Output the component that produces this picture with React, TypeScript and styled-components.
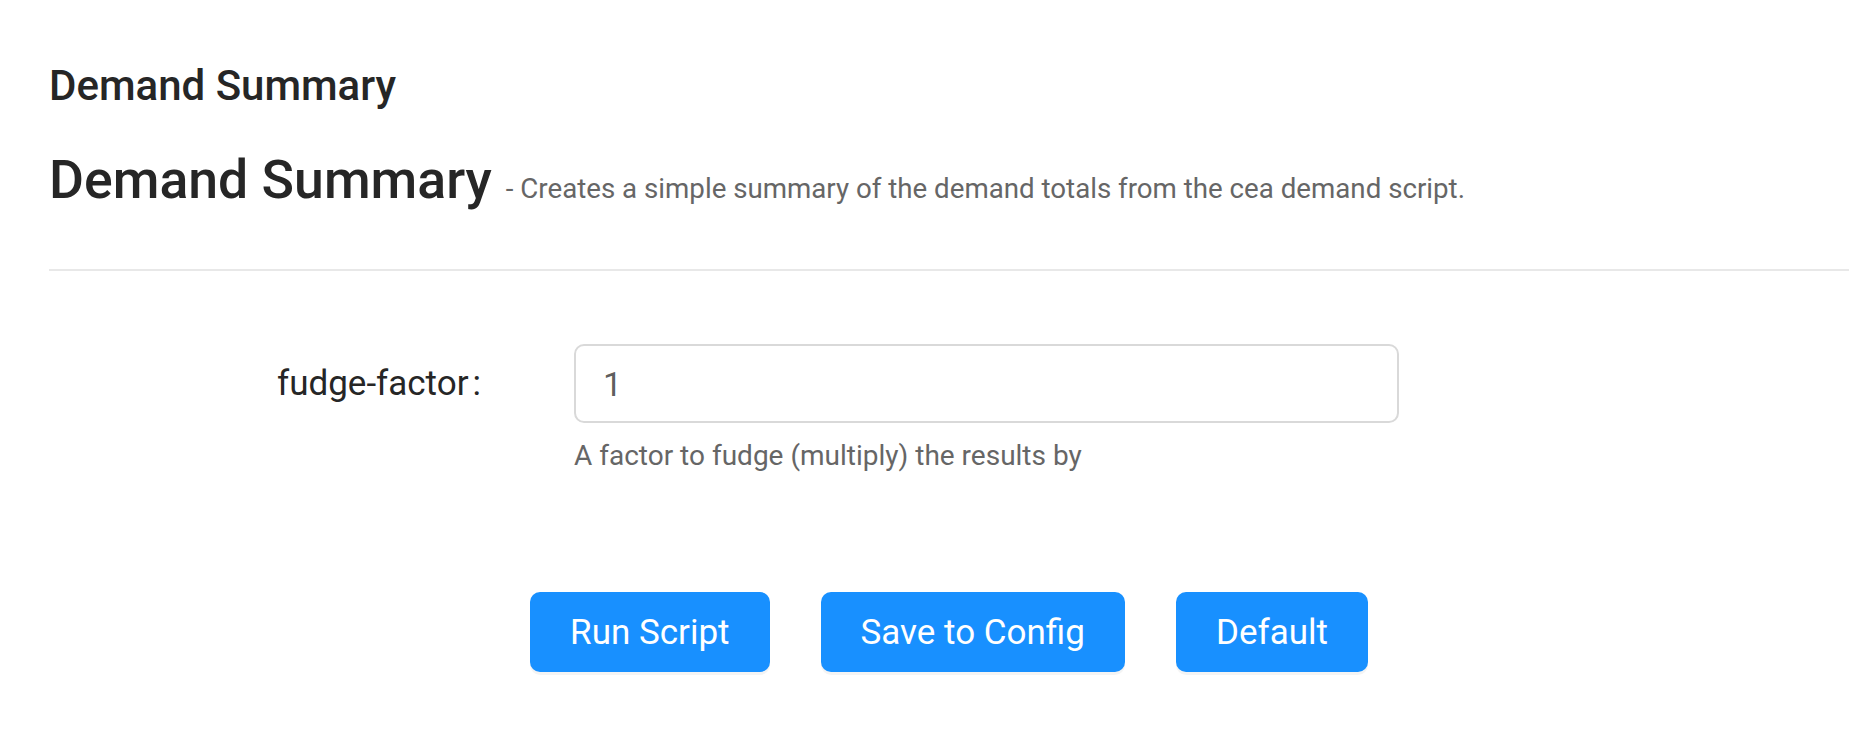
import React from "react";
import styled, { createGlobalStyle } from "styled-components";

const GlobalStyle = createGlobalStyle`
  body {
    margin: 0;
    background: #fff;
    font-family: Roboto, "Liberation Sans", sans-serif;
    color: rgba(0, 0, 0, 0.85);
  }
`;

const Page = styled.div`
  padding: 58px 27px 40px 49px;
`;

const Title = styled.h3`
  margin: 0;
  font-size: 42px;
  line-height: 55px;
  font-weight: 500;
  color: #262626;
`;

const Header = styled.div`
  display: flex;
  align-items: baseline;
  margin-top: 34px;
`;

const ScriptName = styled.h1`
  margin: 0;
  font-size: 53.6px;
  line-height: 65px;
  font-weight: 500;
  color: #262626;
`;

const Description = styled.span`
  margin-left: 14px;
  font-size: 27.7px;
  color: #666;
`;

const Divider = styled.hr`
  margin: 57px 0 0;
  border: 0;
  height: 2px;
  background: #e8e8e8;
`;

const Form = styled.form`
  padding-top: 73px;
`;

const FormItem = styled.div`
  display: grid;
  grid-template-columns: 25% 4.1667% 45.8333%;
  align-items: start;
`;

const Label = styled.label`
  grid-column: 1;
  height: 79px;
  display: flex;
  align-items: center;
  justify-content: flex-end;
  padding-right: 18px;
  font-size: 35px;
  color: #262626;

  &::after {
    content: ":";
    margin-left: 4px;
  }
`;

const Control = styled.div`
  grid-column: 3;
`;

const Input = styled.input`
  box-sizing: border-box;
  display: block;
  width: 100%;
  height: 79px;
  padding: 0 27px;
  border: 2px solid #d9d9d9;
  border-radius: 10px;
  font-family: inherit;
  font-size: 34px;
  color: rgba(0, 0, 0, 0.65);
  outline: none;
`;

const Help = styled.div`
  margin-top: 13px;
  font-size: 28px;
  line-height: 40px;
  color: #666;
`;

const Actions = styled.div`
  display: flex;
  justify-content: center;
  gap: 51px;
  margin-top: 116px;
`;

const Button = styled.button`
  height: 80px;
  padding: 0 40px;
  border: 0;
  border-radius: 10px;
  background: #1890ff;
  color: #fff;
  font-family: inherit;
  font-size: 35px;
  box-shadow: 0 3px 0 rgba(0, 0, 0, 0.045);
  cursor: pointer;
`;

const App = () => (
  <>
    <GlobalStyle />
    <Page>
      <Title>Demand Summary</Title>
      <Header>
        <ScriptName>Demand Summary</ScriptName>
        <Description>- Creates a simple summary of the demand totals from the cea demand script.</Description>
      </Header>
      <Divider />
      <Form onSubmit={(e) => e.preventDefault()}>
        <FormItem>
          <Label htmlFor="fudge-factor">fudge-factor</Label>
          <Control>
            <Input id="fudge-factor" defaultValue="1" />
            <Help>A factor to fudge (multiply) the results by</Help>
          </Control>
        </FormItem>
        <Actions>
          <Button type="button">Run Script</Button>
          <Button type="button">Save to Config</Button>
          <Button type="button">Default</Button>
        </Actions>
      </Form>
    </Page>
  </>
);

export default App;
